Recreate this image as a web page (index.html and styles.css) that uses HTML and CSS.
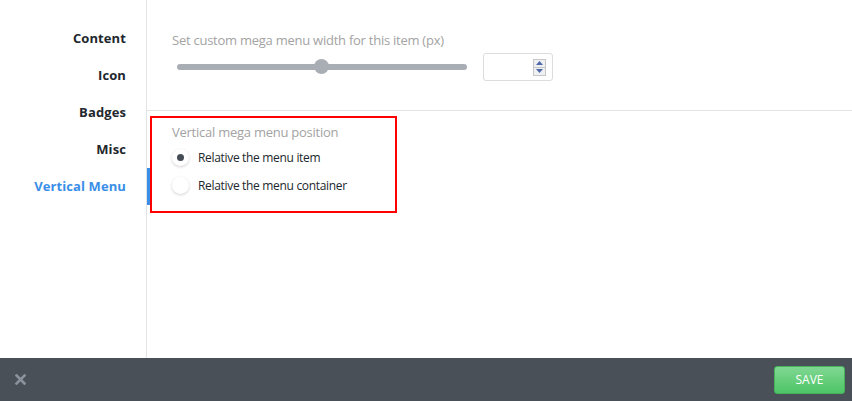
FILE: index.html
```html
<!DOCTYPE html>
<html>
<head>
<meta charset="utf-8">
<link rel="stylesheet" href="styles.css">
</head>
<body>
<div class="app">
  <div class="body">
    <nav class="sidebar">
      <div class="nav-item">Content</div>
      <div class="nav-item">Icon</div>
      <div class="nav-item">Badges</div>
      <div class="nav-item">Misc</div>
      <div class="nav-item active">Vertical Menu</div>
    </nav>
    <main class="main">
      <section class="width-section">
        <div class="field-label">Set custom mega menu width for this item (px)</div>
        <div class="width-row">
          <div class="slider">
            <div class="track"></div>
            <div class="thumb"></div>
          </div>
          <div class="number-input">
            <div class="spinner">
              <span class="spin up"><svg width="7" height="4" viewBox="0 0 7 4"><path d="M0 4 L3.5 0 L7 4Z" fill="#4f69a8"/></svg></span>
              <span class="spin down"><svg width="7" height="4" viewBox="0 0 7 4"><path d="M0 0 L3.5 4 L7 0Z" fill="#4f69a8"/></svg></span>
            </div>
          </div>
        </div>
      </section>
      <section class="position-section">
        <div class="highlight">
          <div class="field-label small">Vertical mega menu position</div>
          <label class="radio-row"><span class="radio checked"></span><span>Relative the menu item</span></label>
          <label class="radio-row"><span class="radio"></span><span>Relative the menu container</span></label>
        </div>
      </section>
    </main>
  </div>
  <footer class="footer">
    <span class="close"><svg width="11" height="11" viewBox="0 0 11 11"><path d="M1.5 1.5 L9.5 9.5 M9.5 1.5 L1.5 9.5" stroke="#8a939c" stroke-width="2.6" stroke-linecap="square"/></svg></span>
    <button class="save">SAVE</button>
  </footer>
</div>
</body>
</html>
```
FILE: styles.css
```css
* { box-sizing: border-box; }
html, body { margin: 0; padding: 0; }
body {
  width: 852px;
  height: 401px;
  overflow: hidden;
  background: #fff;
  font-family: "Open Sans", "Noto Sans", sans-serif;
  color: #2b3036;
}
.app {
  display: flex;
  flex-direction: column;
  height: 401px;
}
.body {
  display: flex;
  height: 358px;
}
.sidebar {
  width: 147px;
  border-right: 1px solid #e3e3e3;
  padding-top: 20px;
  display: flex;
  flex-direction: column;
}
.nav-item {
  position: relative;
  height: 37px;
  line-height: 37px;
  text-align: right;
  padding-right: 20px;
  font-size: 13px;
  font-weight: 700;
  color: #22272d;
  letter-spacing: 0.1px;
}
.nav-item.active { color: #3a8ee8; }
.nav-item.active::after {
  content: "";
  position: absolute;
  right: -4px;
  top: 0;
  width: 3px;
  height: 37px;
  background: #3a8ee8;
}
.main {
  flex: 1;
  display: flex;
  flex-direction: column;
}
.width-section {
  height: 111px;
  border-bottom: 1px solid #e3e3e3;
  padding: 31px 0 0 25px;
}
.field-label {
  font-size: 13px;
  line-height: 18px;
  color: #a3a3a3;
  letter-spacing: -0.25px;
}
.width-row {
  display: flex;
  align-items: center;
  margin-top: 4px;
}
.slider {
  position: relative;
  width: 290px;
  height: 16px;
  margin-left: 5px;
}
.track {
  position: absolute;
  left: 0;
  right: 0;
  top: 5px;
  height: 6px;
  border-radius: 3px;
  background: #a8aeb4;
}
.thumb {
  position: absolute;
  left: 137px;
  top: 0;
  width: 15px;
  height: 15px;
  border-radius: 50%;
  background: #a8aeb4;
}
.number-input {
  margin-left: 16px;
  width: 70px;
  height: 28px;
  border: 1px solid #dcdcdc;
  border-radius: 3px;
  display: flex;
  justify-content: flex-end;
  align-items: center;
  padding-right: 6px;
}
.spinner {
  display: flex;
  flex-direction: column;
  width: 13px;
  height: 17px;
  border: 1px solid #c7c7c7;
  background: #eef0f3;
}
.spin {
  flex: 1;
  display: flex;
  align-items: center;
  justify-content: center;
}
.spin.up { border-bottom: 1px solid #c7c7c7; }
.position-section {
  padding: 5px 0 0 3px;
}
.highlight {
  width: 247px;
  height: 97px;
  border: 2px solid #ff0000;
  padding: 5px 0 0 20px;
}
.field-label.small { margin-bottom: 2px; }
.radio-row {
  display: flex;
  align-items: center;
  height: 28px;
  font-size: 12px;
  color: #22272d;
  letter-spacing: -0.32px;
}
.radio {
  width: 17px;
  height: 17px;
  border-radius: 50%;
  background: #fff;
  box-shadow: 0 1px 3px rgba(0,0,0,0.18);
  margin-right: 9px;
  display: flex;
  align-items: center;
  justify-content: center;
}
.radio.checked::after {
  content: "";
  width: 7px;
  height: 7px;
  border-radius: 50%;
  background: #444c55;
}
.footer {
  height: 43px;
  background: #4a5057;
  display: flex;
  align-items: center;
  justify-content: space-between;
  padding: 0 7px 0 15px;
}
.close { display: flex; }
.save {
  width: 71px;
  height: 28px;
  border: 1px solid #47b25b;
  border-radius: 3px;
  background: linear-gradient(#80d792, #4dc566);
  color: #fff;
  font-family: "Open Sans", "Noto Sans", sans-serif;
  font-size: 12px;
  padding: 0;
}
```
